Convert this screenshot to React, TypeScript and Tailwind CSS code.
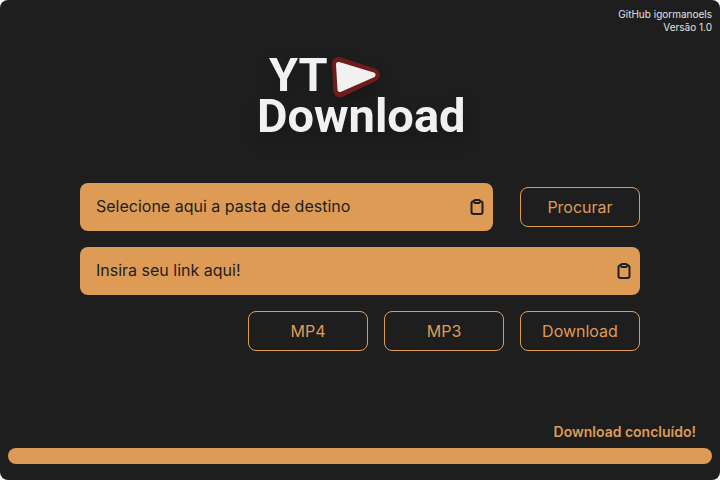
import React from "react";

const font = "font-['Inter','Liberation_Sans',sans-serif]";

function ClipboardIcon() {
  return (
    <svg width="14" height="16" viewBox="0 0 14 16" fill="none" stroke="#1e1e1e" aria-hidden="true">
      <path
        d="M4 2.2H3.5A2 2 0 0 0 1.5 4.2V13A2 2 0 0 0 3.5 15H10.5A2 2 0 0 0 12.5 13V4.2A2 2 0 0 0 10.5 2.2H10"
        strokeWidth="2"
      />
      <rect x="4" y="1" width="6" height="3" rx="1.3" strokeWidth="1.8" />
    </svg>
  );
}

function Field({ label, pasteLabel }: { label: string; pasteLabel: string }) {
  return (
    <div className="flex h-12 min-w-0 flex-1 items-center rounded-lg bg-[#de9b56] pr-2">
      <input
        type="text"
        aria-label={label}
        placeholder={label}
        className="h-full min-w-0 flex-1 bg-transparent pb-0.5 pl-4 text-base text-[#1e1e1e] outline-none placeholder:text-[#1e1e1e]"
      />
      <button type="button" aria-label={pasteLabel} className="flex h-6 w-4 items-center justify-center">
        <ClipboardIcon />
      </button>
    </div>
  );
}

function OutlineButton({ children }: { children: React.ReactNode }) {
  return (
    <button
      type="button"
      className="h-10 w-30 shrink-0 rounded-lg border border-[#de9b56] text-base text-[#de9b56]"
    >
      {children}
    </button>
  );
}

function Logo() {
  return (
    <h1 className="flex w-[206px] flex-col font-['Roboto','Liberation_Sans',sans-serif] text-[47px] leading-[41px] font-bold text-[#f1f1f1] drop-shadow-[0_8px_8px_rgba(0,0,0,0.25)]">
      <span className="flex items-center gap-1 pl-3">
        YT
        <svg width="48" height="41" viewBox="0 -3 48 41" className="overflow-visible" aria-hidden="true">
          <path
            d="M6.5 6.5L41.5 18L8 34Z"
            fill="#721b1b"
            stroke="#721b1b"
            strokeWidth="13"
            strokeLinejoin="round"
          />
          <path
            d="M6.5 7.5L41 18L8 32.5Z"
            fill="#f1f1f1"
            stroke="#f1f1f1"
            strokeWidth="5"
            strokeLinejoin="round"
          />
        </svg>
      </span>
      <span>Download</span>
    </h1>
  );
}

export default function App() {
  return (
    <div className="bg-white">
      <div className={`${font} flex min-h-screen flex-col rounded-lg bg-[#1e1e1e]`}>
        <header className="px-2 pt-2 text-right text-[10px] leading-[13px] text-[#e3e3e3]">
          <p>GitHub igormanoels</p>
          <p>Versão 1.0</p>
        </header>
        <main className="flex flex-1 flex-col px-20 pt-5">
          <div className="mb-[47px] flex justify-center">
            <Logo />
          </div>
          <form className="flex flex-col gap-4" onSubmit={(e) => e.preventDefault()}>
            <div className="flex items-center gap-[27px]">
              <Field label="Selecione aqui a pasta de destino" pasteLabel="Colar pasta" />
              <OutlineButton>Procurar</OutlineButton>
            </div>
            <div className="flex">
              <Field label="Insira seu link aqui!" pasteLabel="Colar link" />
            </div>
            <div className="flex justify-end gap-4">
              <OutlineButton>MP4</OutlineButton>
              <OutlineButton>MP3</OutlineButton>
              <OutlineButton>Download</OutlineButton>
            </div>
          </form>
        </main>
        <footer className="px-2 pb-4">
          <p id="status" className="mb-1.5 pr-4 text-right text-sm font-semibold text-[#de9b56]">
            Download concluído!
          </p>
          <div
            role="progressbar"
            aria-labelledby="status"
            aria-valuenow={100}
            aria-valuemin={0}
            aria-valuemax={100}
            className="h-4 rounded-full bg-[#de9b56]"
          />
        </footer>
      </div>
    </div>
  );
}
